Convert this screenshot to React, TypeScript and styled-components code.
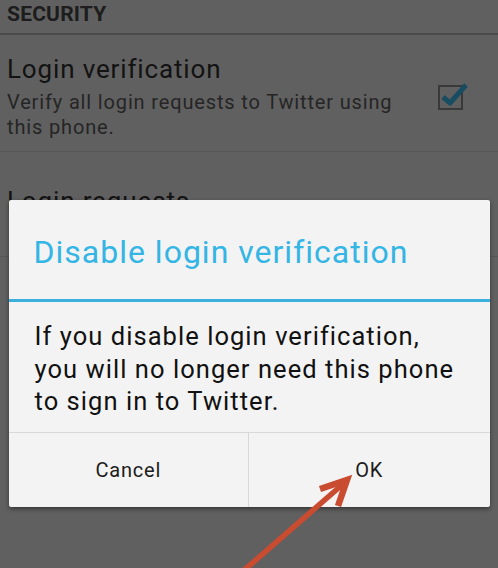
import React from 'react';
import styled, { createGlobalStyle } from 'styled-components';

const GlobalStyle = createGlobalStyle`
  html, body {
    margin: 0;
    padding: 0;
    background: #f0f0f0;
    font-family: Roboto, 'Noto Sans', sans-serif;
    overflow: hidden;
  }
`;

const Screen = styled.div`
  position: relative;
  width: 498px;
  height: 568px;
  overflow: hidden;
  background: #f0f0f0;
`;

const SectionHeader = styled.div`
  height: 33px;
  padding-left: 7px;
  font-size: 21px;
  line-height: 28px;
  font-weight: 700;
  letter-spacing: 0.2px;
  color: #4a4a4a;
  border-bottom: 2px solid #bcbcbc;
`;

const PrefRow = styled.div<{ $top: number; $bottom: number }>`
  display: flex;
  align-items: center;
  gap: 16px;
  padding: ${({ $top }) => $top}px 35px ${({ $bottom }) => $bottom}px 7px;
  border-bottom: 1px solid #d6d6d6;
`;

const PrefText = styled.div`
  flex: 1;
  display: flex;
  flex-direction: column;
  gap: 6px;
`;

const PrefTitle = styled.div`
  font-size: 26px;
  line-height: 30px;
  letter-spacing: 0.85px;
  color: #303030;
`;

const PrefSummary = styled.div`
  font-size: 20px;
  line-height: 25px;
  letter-spacing: 0.85px;
  color: #5e5e5e;
`;

const CheckBox = styled.div`
  position: relative;
  width: 24px;
  height: 24px;
  flex: none;
`;

const Overlay = styled.div`
  position: absolute;
  inset: 0;
  background: rgba(0, 0, 0, 0.6);
  display: flex;
  justify-content: center;
  align-items: flex-start;
  padding-top: 200px;
`;

const Dialog = styled.div`
  width: 481px;
  background: #f3f3f3;
  border-radius: 2px;
  box-shadow: 0 2px 4px rgba(0, 0, 0, 0.45);
  display: flex;
  flex-direction: column;
`;

const DialogTitle = styled.div`
  padding: 32px 25px 0;
  height: 67px;
  font-size: 32px;
  line-height: 40px;
  letter-spacing: 1px;
  color: #33b5e5;
  border-bottom: 3px solid #3bb0dc;
`;

const DialogBody = styled.div`
  padding: 18px 20px 14px 26px;
  font-size: 25.5px;
  line-height: 32.5px;
  letter-spacing: 1.05px;
  color: #111;
`;

const ButtonBar = styled.div`
  display: grid;
  grid-template-columns: 1fr 1fr;
  border-top: 1px solid #d8d8d8;
  height: 74px;
`;

const DialogButton = styled.button<{ $divider?: boolean }>`
  border: none;
  background: transparent;
  font-family: Roboto, sans-serif;
  font-size: 20px;
  letter-spacing: 0.8px;
  color: #1c1c1c;
  padding: 0;
  ${({ $divider }) => $divider && 'border-right: 1px solid #d8d8d8;'}
`;

const Annotation = styled.svg`
  position: absolute;
  left: 0;
  top: 0;
  pointer-events: none;
`;

export default function App() {
  return (
    <Screen>
      <GlobalStyle />
      <SectionHeader>SECURITY</SectionHeader>
      <PrefRow $top={19} $bottom={11}>
        <PrefText>
          <PrefTitle>Login verification</PrefTitle>
          <PrefSummary>Verify all login requests to Twitter using this phone.</PrefSummary>
        </PrefText>
        <CheckBox>
          <svg width="32" height="30" viewBox="0 0 32 30" style={{ position: 'absolute', left: -1, top: -3 }}>
            <rect x="1" y="4" width="23" height="23" fill="none" stroke="#8f8f8f" strokeWidth="2" />
            <path d="M5 15 L12 21 L28 3" fill="none" stroke="#3cbdf0" strokeWidth="5" strokeLinejoin="round" />
          </svg>
        </CheckBox>
      </PrefRow>
      <PrefRow $top={34} $bottom={40}>
        <PrefText>
          <PrefTitle>Login requests</PrefTitle>
        </PrefText>
      </PrefRow>

      <Overlay>
        <Dialog>
          <DialogTitle>Disable login verification</DialogTitle>
          <DialogBody>
            If you disable login verification, you will no longer need this phone to sign in to
            Twitter.
          </DialogBody>
          <ButtonBar>
            <DialogButton $divider>Cancel</DialogButton>
            <DialogButton>OK</DialogButton>
          </ButtonBar>
        </Dialog>
      </Overlay>

      <Annotation width="498" height="568" viewBox="0 0 498 568">
        <line x1="242" y1="572" x2="343" y2="484" stroke="#c94b30" strokeWidth="5.5" />
        <polyline points="320,489 347,480 338,506" fill="none" stroke="#c94b30" strokeWidth="6.5" strokeLinejoin="miter" />
      </Annotation>
    </Screen>
  );
}
